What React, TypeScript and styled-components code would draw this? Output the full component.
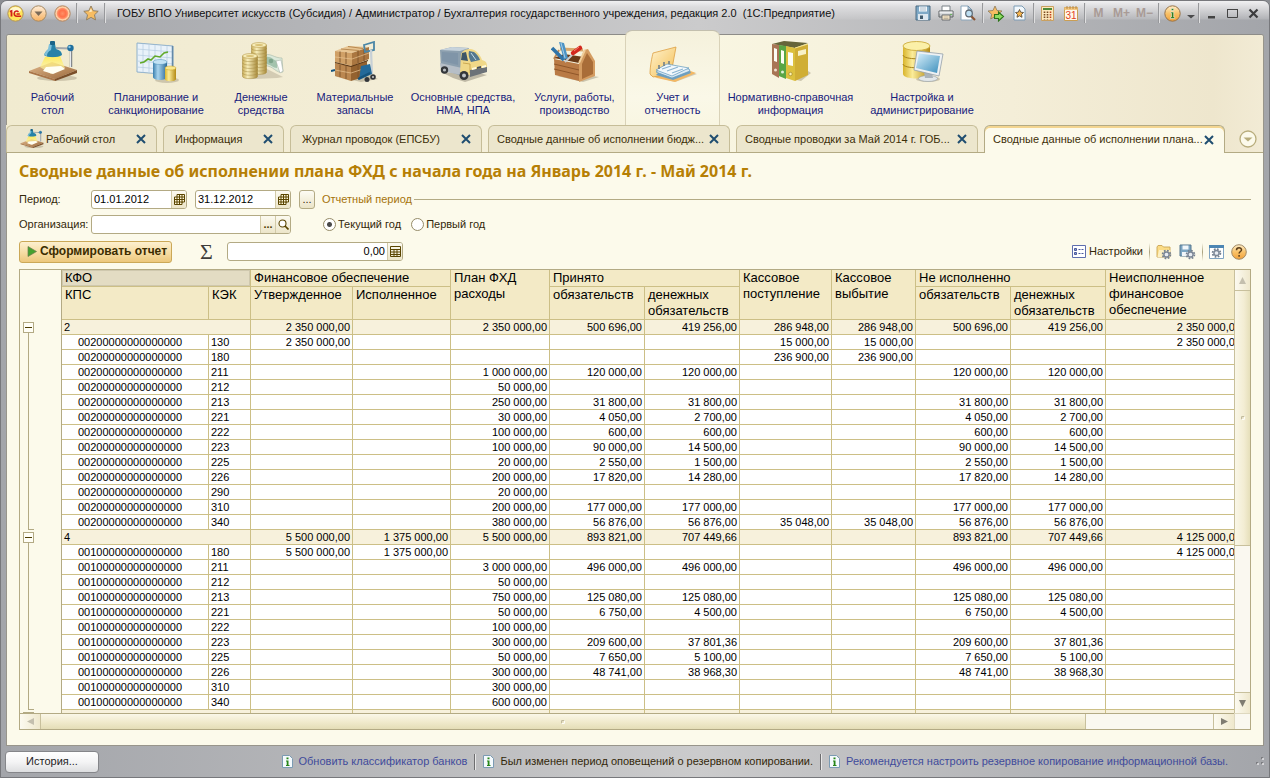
import React from "react";
import styled, { createGlobalStyle, css } from "styled-components";

const GlobalStyle = createGlobalStyle`
  * { box-sizing: border-box; }
  html, body { margin: 0; padding: 0; height: 100%; }
  body {
    font-family: "Liberation Sans", Arial, sans-serif;
    font-size: 11px;
    line-height: 13px;
    color: #33280a;
    background: #8b8d92;
    overflow: hidden;
  }
  button, input { font: inherit; color: inherit; margin: 0; }
  button { cursor: pointer; }
  svg { display: block; flex: none; }
`;

/* ---------- window frame ---------- */

const Window = styled.div`
  display: flex;
  flex-direction: column;
  height: 100vh;
  border: 1px solid #77787c;
  border-radius: 7px 7px 0 0;
  background: linear-gradient(90deg, #a3a5aa 0%, #b4b5b8 25%, #cbcbcc 55%, #b4b5b8 80%, #a3a5aa 100%);
`;

const TitleBar = styled.header`
  display: flex;
  align-items: center;
  height: 33px;
  flex: none;
  padding: 0 5px 9px 6px;
  border-radius: 6px 6px 0 0;
  background: linear-gradient(180deg, #f1f1f2 0, #dcdcde 6px, rgba(210, 210, 212, 0.3) 18px, rgba(200, 200, 202, 0) 19px);
`;

const TitleText = styled.h1`
  flex: 1;
  min-width: 0;
  margin: 0 0 0 8px;
  font-size: 11px;
  font-weight: normal;
  line-height: 14px;
  color: #111;
  white-space: pre;
  overflow: hidden;
  text-overflow: ellipsis;
`;

const BarButton = styled.button<{ $w?: number }>`
  display: flex;
  align-items: center;
  justify-content: center;
  width: ${(p) => p.$w ?? 23}px;
  height: 20px;
  padding: 0;
  border: 0;
  background: none;
  flex: none;
`;

const BarSeparator = styled.span<{ $m?: number }>`
  width: 1px;
  height: 20px;
  margin: 0 ${(p) => p.$m ?? 2}px;
  background: #97989b;
  box-shadow: 1px 0 0 #dfdfe0;
  flex: none;
`;

const MemoryButton = styled(BarButton)`
  font-size: 12px;
  font-weight: bold;
  color: #a99b96;
`;

const Body = styled.div`
  display: flex;
  flex-direction: column;
  flex: 1;
  min-height: 0;
  margin: 0 5px;
  border: 1px solid #98958b;
  border-top-color: #8d8c88;
  border-radius: 3px 3px 0 0;
  background: #fcfaeb;
`;

/* ---------- sections ribbon ---------- */

const Ribbon = styled.nav`
  display: flex;
  gap: 4px;
  height: 90px;
  flex: none;
  border-radius: 3px 3px 0 0;
  background: linear-gradient(90deg, #f1ebd0 0, #f3edd6 30%, #f9f6e2 55%, #f4eed8 80%, #eee6cd 96%, #f2ebd5 100%);
`;

const Section = styled.button<{ $w: number; $active?: boolean }>`
  display: flex;
  flex-direction: column;
  align-items: center;
  width: ${(p) => p.$w}px;
  flex: none;
  padding: 6px 0 0;
  border: 0;
  background: none;
  color: #17217d;
  line-height: 13px;
  text-align: center;
  white-space: pre-line;

  svg { margin-bottom: 8px; }

  ${(p) =>
    p.$active &&
    css`
      margin-top: -5px;
      padding-top: 10px;
      border: 1px solid #d9d2b8;
      border-top-color: #c3bfae;
      border-bottom: 0;
      border-radius: 7px 7px 0 0;
      background: linear-gradient(180deg, #f5f1dc, #faf8e8 70%, #f9f6e2);
    `}
`;

/* ---------- open pages ---------- */

const TabStrip = styled.div`
  display: flex;
  align-items: flex-end;
  gap: 6px;
  height: 28px;
  flex: none;
  margin-left: -1px;
  border-bottom: 1px solid #b3aa84;
  background: linear-gradient(90deg, #f1ebd0 0, #f3edd6 30%, #f9f6e2 55%, #f4eed8 80%, #eee6cd 96%, #f2ebd5 100%);
`;

const Tab = styled.div<{ $w: number; $active?: boolean }>`
  display: flex;
  align-items: center;
  width: ${(p) => p.$w}px;
  height: 27px;
  padding: 0 10px 0 ${(p) => (p.$w > 200 ? 8 : 11)}px;
  border: 1px solid #c6bd98;
  border-bottom: 0;
  border-radius: 6px 6px 0 0;
  background: #ece6cd;
  color: #3c2f08;

  ${(p) =>
    p.$active &&
    css`
      height: 28px;
      margin-bottom: -1px;
      border-color: #b3aa84;
      background: #fcfaeb;
      box-shadow: inset 0 2px 0 #f3d590;
    `}
`;

const TabLabel = styled.span`
  flex: 1;
  min-width: 0;
  white-space: nowrap;
`;

const TabClose = styled.button`
  display: flex;
  padding: 0;
  border: 0;
  background: none;
`;

const TabMenu = styled.button`
  display: flex;
  align-self: center;
  margin-left: 8px;
  padding: 0;
  border: 0;
  background: none;
`;

/* ---------- report form ---------- */

const Page = styled.main`
  display: flex;
  flex-direction: column;
  flex: 1;
  min-height: 0;
  padding: 8px 12px 15px;
`;

const Heading = styled.h2`
  margin: 0 0 9px;
  font-family: "Noto Sans", sans-serif;
  font-size: 16px;
  font-weight: bold;
  line-height: 20px;
  color: #b67f05;
  white-space: nowrap;
`;

const FormRow = styled.div`
  display: flex;
  align-items: center;
  height: 19px;
  margin-bottom: 6px;
  flex: none;
`;

const FieldLabel = styled.label`
  width: 72px;
  flex: none;
`;

const Field = styled.span<{ $w: number }>`
  display: flex;
  width: ${(p) => p.$w}px;
  height: 19px;
  flex: none;
  margin-right: 8px;
  border: 1px solid #b3aa84;
  border-radius: 3px;
  background: #fff;
  overflow: hidden;
`;

const Input = styled.input<{ $right?: boolean }>`
  flex: 1;
  width: 0;
  min-width: 0;
  padding: 0 2px;
  border: 0;
  outline: 0;
  background: none;
  color: #000;
  text-align: ${(p) => (p.$right ? "right" : "left")};
`;

const FieldButton = styled.button`
  display: flex;
  align-items: center;
  justify-content: center;
  width: 15px;
  padding: 0;
  border: 0;
  border-left: 1px solid #d2caa8;
  background: linear-gradient(180deg, #fcfaf0, #ece5c9);
  color: #4d3c00;
  font-weight: bold;
`;

const MoreButton = styled.button`
  width: 16px;
  height: 19px;
  padding: 0;
  margin-right: 7px;
  border: 1px solid #b3aa84;
  border-radius: 3px;
  background: linear-gradient(180deg, #fdfcf4, #ebe4c8);
`;

const Legend = styled.span`
  display: flex;
  align-items: center;
  flex: 1;
  gap: 2px;
  color: #a5730a;
  white-space: nowrap;

  &::after {
    content: "";
    flex: 1;
    height: 1px;
    background: #b3aa84;
  }
`;

const RadioGroup = styled.span`
  display: flex;
  gap: 10px;
  margin-left: 24px;
`;

const RadioLabel = styled.label`
  display: flex;
  align-items: center;
  gap: 2px;
`;

const Radio = styled.input`
  appearance: none;
  width: 13px;
  height: 13px;
  border: 1px solid #958b68;
  border-radius: 50%;
  background: #fff;

  &:checked {
    background: radial-gradient(circle, #4a4a4a 0, #4a4a4a 2px, #fff 3px);
  }
`;

const CommandRow = styled(FormRow)`
  height: 23px;
  margin-bottom: 6px;
`;

const RunButton = styled.button`
  display: flex;
  align-items: center;
  gap: 3px;
  width: 153px;
  height: 22px;
  flex: none;
  padding: 0 4px 0 7px;
  border: 1px solid #cba857;
  border-radius: 3px;
  background: linear-gradient(180deg, #fdf0cf, #f6dca2 55%, #ecc77c);
  color: #3c2c00;
  font-size: 12px;
  font-weight: bold;
  white-space: nowrap;
`;

const Sigma = styled.span`
  width: 55px;
  padding-left: 28px;
  font-family: "Liberation Serif", serif;
  font-size: 22px;
  line-height: 22px;
  color: #3f3d3a;
`;

const Commands = styled.span`
  display: flex;
  align-items: center;
  margin-left: auto;
  margin-right: 4px;
`;

const CommandButton = styled.button<{ $ml?: number }>`
  display: flex;
  align-items: center;
  gap: 3px;
  margin-left: ${(p) => p.$ml ?? 0}px;
  padding: 0;
  border: 0;
  background: none;
`;

const CommandSeparator = styled.span`
  width: 1px;
  height: 18px;
  margin: 0 6px;
  background: linear-gradient(180deg, #fcfaeb, #a9a07c, #fcfaeb);
`;

/* ---------- report ---------- */

const Report = styled.div`
  display: grid;
  grid-template-columns: minmax(0, 1fr) 16px;
  grid-template-rows: minmax(0, 1fr) 16px;
  flex: 1;
  min-height: 0;
  border: 1px solid #b3aa84;
`;

const Viewport = styled.div`
  display: flex;
  align-items: flex-start;
  overflow: auto;
  scrollbar-width: none;
  background: #fff;
`;

const Gutter = styled.div`
  width: 42px;
  flex: none;
  padding-top: 50px;
  border-right: 1px solid #b3aa84;
  background: #fcfaeb;
`;

const GutterGroup = styled.div<{ $rows: number }>`
  display: flex;
  flex-direction: column;
  align-items: flex-start;
  height: ${(p) => p.$rows * 15}px;
  padding: 2px 0 0 3px;

  &::after {
    content: "";
    flex: 1;
    width: 5px;
    margin-left: 5px;
    border-left: 1px solid #b3aa84;
    border-bottom: 1px solid #b3aa84;
  }
`;

const Collapse = styled.button`
  display: flex;
  align-items: center;
  justify-content: center;
  width: 11px;
  height: 11px;
  flex: none;
  padding: 0;
  border: 1px solid #b3aa84;
  background: #fffef6;

  &::before {
    content: "";
    width: 7px;
    height: 1px;
    background: #4d3c00;
  }
`;

const Table = styled.table`
  width: 1182px;
  flex: none;
  table-layout: fixed;
  border-collapse: separate;
  border-spacing: 0;
  color: #000;
`;

const HeadCell = styled.th<{ $selected?: boolean }>`
  padding: 0 0 0 3px;
  border-right: 1px solid #ccbf86;
  border-bottom: 1px solid #ccbf86;
  background: #f3eac6;
  font-size: 13px;
  font-weight: normal;
  line-height: 16px;
  text-align: left;
  vertical-align: top;
  white-space: nowrap;
  ${(p) =>
    p.$selected &&
    css`
      background: #e3dcc3;
      box-shadow: inset 0 0 0 1px #cfc8ae;
    `}
`;

const HeadRow = styled.tr<{ $h: number }>`
  height: ${(p) => p.$h}px;
`;

const Row = styled.tr<{ $group?: boolean }>`
  height: 15px;
  background: ${(p) => (p.$group ? "#f7f1dc" : "#fff")};
`;

const Cell = styled.td<{ $align?: "left" | "code" }>`
  height: 15px;
  padding: ${(p) => (p.$align === "code" ? "0 0 0 16px" : p.$align === "left" ? "0 0 0 2px" : "0 2px 0 0")};
  border-right: 1px solid #ccbf86;
  border-bottom: 1px solid #ccbf86;
  text-align: ${(p) => (p.$align ? "left" : "right")};
  line-height: 14px;
  white-space: nowrap;
`;

const VScroll = styled.div`
  display: flex;
  flex-direction: column;
  border-left: 1px solid #c8c09c;
  background: #faf8f0;
`;

const VThumb = styled.div`
  display: flex;
  align-items: center;
  justify-content: center;
  flex: 255;
  border: solid #c8c09c;
  border-width: 1px 0;
  background: linear-gradient(90deg, #faf7e8, #f3edd3 60%, #e6dfba);
`;

const VTrack = styled.div`
  flex: 147;
  border-bottom: 1px solid #c8c09c;
`;

const ScrollButton = styled.button<{ $tall?: boolean }>`
  display: flex;
  align-items: center;
  justify-content: center;
  width: ${(p) => (p.$tall ? 15 : 20)}px;
  height: ${(p) => (p.$tall ? 20 : 15)}px;
  padding: 0;
  border: 0;
  flex: none;
  background: linear-gradient(90deg, #fcfaf0, #efe8cd);
`;

const HScroll = styled.div`
  display: flex;
  border-top: 1px solid #b3aa84;
  background: #faf8f0;
`;

const HThumb = styled.div`
  display: flex;
  align-items: center;
  justify-content: center;
  flex: 1047;
  border: solid #c8c09c;
  border-width: 0 1px;
  background: linear-gradient(180deg, #faf7e8, #f1ebce 50%, #e4ddb6);
`;

const HTrack = styled.div`
  flex: 127;
  border-right: 1px solid #c8c09c;
`;

const Grip = styled.span`
  width: 4px;
  height: 4px;
  border: 1px solid #b9b294;
  border-right-color: #fff;
  border-bottom-color: #fff;
  border-radius: 2px;
`;

const Corner = styled.div`
  border: 1px solid #ded8bf;
  border-width: 1px 0 0 1px;
  background: #faf8f0;
`;

/* ---------- status bar ---------- */

const StatusBar = styled.footer`
  display: flex;
  align-items: center;
  height: 31px;
  flex: none;
  padding: 0 4px 0 4px;
`;

const HistoryButton = styled.button`
  width: 94px;
  height: 22px;
  padding: 0;
  border: 1px solid #85868a;
  border-radius: 4px;
  background: linear-gradient(180deg, #fff, #f4f4f5 50%, #dddee0);
  color: #222;
`;

const Messages = styled.div`
  display: flex;
  align-items: center;
  margin-left: auto;
  margin-right: 26px;
`;

const Message = styled.span`
  display: flex;
  align-items: center;
  gap: 6px;
  white-space: nowrap;
`;

const MessageLink = styled.a`
  color: #3f4b9b;
  text-decoration: none;
`;

const MessageSeparator = styled.span`
  width: 2px;
  height: 16px;
  margin: 0 7px;
  border-left: 1px solid #6d6d6f;
  border-right: 1px solid #e8e8e8;
`;

/* ---------- drawings ---------- */

const GradientSheet = styled.svg`
  position: absolute;
`;

const Gradients = () => (
  <GradientSheet width="0" height="0" aria-hidden="true">
    <defs>
      <linearGradient id="wood" x1="0" y1="0" x2="1" y2="1">
        <stop offset="0" stopColor="#e2b98c" />
        <stop offset="1" stopColor="#9a683c" />
      </linearGradient>
      <linearGradient id="gold" x1="0" x2="1">
        <stop offset="0" stopColor="#d9b52c" />
        <stop offset="0.35" stopColor="#fbec9a" />
        <stop offset="1" stopColor="#b48a14" />
      </linearGradient>
      <linearGradient id="coin" x1="0" x2="1">
        <stop offset="0" stopColor="#c9ad58" />
        <stop offset="0.35" stopColor="#f8eebb" />
        <stop offset="1" stopColor="#a88a3a" />
      </linearGradient>
      <linearGradient id="blue" x1="0" x2="1">
        <stop offset="0" stopColor="#3a7fae" />
        <stop offset="0.35" stopColor="#a8d4ee" />
        <stop offset="1" stopColor="#2d6b98" />
      </linearGradient>
      <linearGradient id="screen" x1="0" y1="0" x2="1" y2="1">
        <stop offset="0" stopColor="#d9f0fa" />
        <stop offset="1" stopColor="#3d8fbd" />
      </linearGradient>
      <linearGradient id="light" x1="0" y1="0" x2="0" y2="1">
        <stop offset="0" stopColor="#ffe94a" />
        <stop offset="1" stopColor="#fff9c8" stopOpacity="0.6" />
      </linearGradient>
      <linearGradient id="folder" x1="0" y1="0" x2="1" y2="1">
        <stop offset="0" stopColor="#fff3cf" />
        <stop offset="1" stopColor="#f4bf55" />
      </linearGradient>
      <linearGradient id="orange" x1="0" y1="0" x2="0" y2="1">
        <stop offset="0" stopColor="#ffeec8" />
        <stop offset="0.5" stopColor="#f9c269" />
        <stop offset="1" stopColor="#f2a13a" />
      </linearGradient>
      <linearGradient id="peach" x1="0" y1="0" x2="0" y2="1">
        <stop offset="0" stopColor="#ffeeda" />
        <stop offset="1" stopColor="#f7b160" />
      </linearGradient>
      <radialGradient id="red">
        <stop offset="0" stopColor="#ff8f66" />
        <stop offset="0.6" stopColor="#ff7048" />
        <stop offset="1" stopColor="#ff9a75" />
      </radialGradient>
    </defs>
  </GradientSheet>
);

const DeskIcon = ({ w = 48, h = 42 }: { w?: number; h?: number }) => (
  <svg width={w} height={h} viewBox="0 0 48 42">
    <ellipse cx="28" cy="37" rx="20" ry="3" fill="#8a7f66" opacity="0.35" />
    <path d="M0 30 23 21 48 29 26 38Z" fill="url(#wood)" />
    <path d="M0 30v2l26 8v-2Z" fill="#a97549" />
    <path d="M26 38v2l22-8v-3Z" fill="#7b4f2a" />
    <path d="M27 7 41 7.500" stroke="#a2a8ad" strokeWidth="2" />
    <path d="M42 8v18" stroke="#84898e" strokeWidth="2.500" />
    <path d="M41.500 8v18" stroke="#e8ebee" />
    <path d="M16 16 11 26 22 33 36 27 31 15Z" fill="url(#light)" opacity="0.9" />
    <path d="M17 26 32 25 36 28 24 33 14 30Z" fill="#fffef2" />
    <path d="M20 3h6l1 5c4 1 6 3 6 6-4 3-15 3-18 0 1-3 3-5 5-6Z" fill="#2782a8" />
    <path d="M20 3h3l-1 6c-3 2-4 3-4 6l-3-1c1-3 3-5 4-6Z" fill="#7fc0da" />
    <path d="M16 15c4 2 13 2 17 0-3 3-13 4-17 0Z" fill="#fff06a" />
    <rect x="21" y="0" width="5" height="4" rx="1" fill="#1b6488" />
    <circle cx="41.500" cy="7" r="3.200" fill="#1f6f9f" />
    <circle cx="40.500" cy="6" r="1.200" fill="#8cc7e4" />
  </svg>
);

const PlanIcon = () => (
  <svg width="48" height="42" viewBox="0 0 48 42">
    <ellipse cx="35" cy="39" rx="12" ry="3" fill="#8a7f66" opacity="0.35" />
    <path d="M5 2 41 5v29L5 31Z" fill="#e9f2fa" stroke="#8fb0ca" />
    <path d="M11 2.500v29M17 3v29M23 3.500v29M29 4v29M35 4.500v29M5 8l36 3M5 14l36 3M5 20l36 3M5 26l36 3" stroke="#b9cfe2" strokeWidth="0.800" />
    <path d="M40.500 5v29" stroke="#6388a8" strokeWidth="1.500" />
    <path d="m8 22 4-1 4-3 3 1 4-4 5 1 4-4 4-1" fill="none" stroke="#62aa2a" strokeWidth="1.600" />
    <path d="M21 21v15c0 4 14 4 14 0V21Z" fill="url(#blue)" />
    <ellipse cx="28" cy="21" rx="7" ry="2.500" fill="#c2e2f4" stroke="#4c8fb9" strokeWidth="0.500" />
    <path d="M33 27v11c0 3 11 3 11 0V27Z" fill="url(#gold)" />
    <ellipse cx="38.500" cy="27" rx="5.500" ry="2" fill="#fbe88c" stroke="#c29a22" strokeWidth="0.500" />
  </svg>
);

const CoinStack = ({ x, y, n }: { x: number; y: number; n: number }) => (
  <g>
    {Array.from({ length: n }, (_, i) => (
      <path
        key={i}
        d={`M${x - 7.5} ${y + (n - 1 - i) * 3.4}v3.400c0 3 15 3 15 0v-3.400Z`}
        fill="url(#coin)"
        stroke="#a58a42"
        strokeWidth="0.500"
      />
    ))}
    <ellipse cx={x} cy={y} rx="7.500" ry="2.400" fill="#f6ecb8" stroke="#b89b4c" strokeWidth="0.600" />
    <ellipse cx={x} cy={y} rx="4" ry="1.100" fill="#d9c176" />
  </g>
);

const MoneyIcon = () => (
  <svg width="48" height="42" viewBox="0 0 48 42">
    <path d="M12 36 30 28 46 36 40 37 16 38Z" fill="#8a7f66" opacity="0.300" />
    <path d="M28 14c6-2 9 3 17 3l1 14c-7 2-10-7-18-6Z" fill="#dbe9da" stroke="#a6b7a6" strokeWidth="0.600" />
    <path d="M29 16c5-1 7 3 11 4v7c-4 0-7-4-11-4Z" fill="#a3c3ad" />
    <circle cx="34" cy="20" r="2.300" fill="#7fa58c" />
    <path d="m39 20 5-1 2 11-3 2Z" fill="#fff" stroke="#9fa89f" strokeWidth="0.500" />
    <CoinStack x={22} y={4} n={8} />
    <CoinStack x={13} y={15} n={6} />
  </svg>
);

const BoxesIcon = () => (
  <svg width="48" height="42" viewBox="0 0 48 42">
    <path d="M4 35 38 34 47 38 30 41Z" fill="#8a7f66" opacity="0.400" />
    <path d="m4 22 16 3v15L4 35Z" fill="#bb8750" />
    <path d="m20 25 16-5v15l-16 5Z" fill="#94622f" />
    <path d="m4 10 13-5 21 1-17 6Z" fill="#e8c592" />
    <path d="m4 10 17 2v13L4 21Z" fill="#d0a066" />
    <path d="m21 12 17-6v12l-17 7Z" fill="#aa7640" />
    <path d="M4 21.500 20 25.500l17-6" fill="none" stroke="#5b3715" strokeWidth="1.100" />
    <path d="M9 10.500v11M15 11v12M27 10v12M33 8v12M9 24v12M15 25v13M27 23v13" stroke="#7d5228" strokeWidth="0.900" />
    <path d="m10 8 18 1.500M17 5.500l15 2" stroke="#b98a52" />
    <path d="m4 16 17 2 17-6M4 29l16 3 15-5" fill="none" stroke="#e8c390" strokeWidth="0.700" />
    <path d="M33 4 43 1v8l-9 2Z" fill="none" stroke="#4a86a6" strokeWidth="1.800" />
    <path d="m40 9 1 24" stroke="#c7d0d6" strokeWidth="2.200" />
    <path d="m30 25 9-2 2 10-13 6Z" fill="#236a9a" />
    <path d="m27 38 12-6M0 30l4-1" stroke="#15547d" strokeWidth="2" />
    <circle cx="36" cy="38.500" r="2.500" fill="#33373b" />
    <circle cx="42" cy="36" r="2.800" fill="#33373b" />
    <circle cx="42" cy="36" r="1" fill="#d0d0d0" />
  </svg>
);

const VanIcon = () => (
  <svg width="48" height="42" viewBox="0 0 48 42">
    <path d="M4 32 30 30 48 34 26 41 14 37Z" fill="#6e6757" opacity="0.400" />
    <path d="m1 9 12-3 17 1-5 12-2 16L2 28Z" fill="#8c9fae" />
    <path d="m1 9 12-3 17 1-9 3Z" fill="#c7d3dc" />
    <path d="M3 11 19 12v12L3 20Z" fill="#8095a8" />
    <path d="m1 22 22 5v7L2 30Z" fill="#b6bec6" />
    <path d="M22 13c2-4 5-5 10-5 5 1 9 5 11 11 4 1 5 3 5 6l-1 5-21 5-5-3Z" fill="#f0d888" />
    <path d="m30 10 5 1c3 2 5 5 6 8l-9 2c-2-4-3-7-2-11Z" fill="#53778f" />
    <path d="m23 12 4-1 2 9-7-1Z" fill="#3e5668" />
    <path d="m32 12 5 7" stroke="#c5dbe6" />
    <path d="m24 22 7 1v9" fill="none" stroke="#c29d45" strokeWidth="0.800" />
    <path d="m31 29 17-3v5l-17 5Z" fill="#6c7278" />
    <path d="m33 27 4-1v2l-4 1ZM43 25l4-1v2l-4 1Z" fill="#fffbe0" />
    <path d="m38 26 4-1v2l-4 1Z" fill="#47505a" />
    <circle cx="5.500" cy="29" r="3.700" fill="#34373a" />
    <circle cx="5.500" cy="29" r="1.600" fill="#b9bdc0" />
    <circle cx="25" cy="34.500" r="4.500" fill="#34373a" />
    <circle cx="25" cy="34.500" r="2" fill="#c1c5c8" />
  </svg>
);

const ToolboxIcon = () => (
  <svg width="48" height="42" viewBox="0 0 48 42">
    <path d="M6 35 36 34 48 36 32 41Z" fill="#8a7f66" opacity="0.400" />
    <path d="M3 18 8 9" stroke="#c58c54" strokeWidth="2" />
    <path d="M9 8 32 9" stroke="#d9a86c" strokeWidth="3" />
    <path d="m3 17 10-4 20 3-5 6Z" fill="#6a3a18" />
    <path d="m3 18 25 5v17L4 34Z" fill="#b97a45" />
    <path d="m3 23 25 6M3 28l25 6" stroke="#8f5629" />
    <path d="m28 22 5-13 4-1 7 12v15l-16 6Z" fill="#d49c61" />
    <path d="m31 23 5-11 6 9v12l-11 5Z" fill="#a96d38" />
    <path d="M28 22 34 9" stroke="#f1cf9a" strokeWidth="1.800" />
    <path d="m1 7 12 12" stroke="#2f74a8" strokeWidth="3.500" />
    <path d="m8 1 5 1 4 15-4 2Z" fill="#4c93c4" />
    <path d="m10 2 4 15" stroke="#a8d0ea" />
    <path d="m14 21 9-9" stroke="#c5cbd0" strokeWidth="2" />
    <path d="m22 12 7-5" stroke="#d3281e" strokeWidth="4.500" strokeLinecap="round" />
    <path d="m23 10 5-4" stroke="#f78274" />
  </svg>
);

const AccountingIcon = () => (
  <svg width="48" height="42" viewBox="0 0 48 42">
    <path d="M8 36 26 41 48 33 38 30Z" fill="#8a7f66" opacity="0.350" />
    <path d="m1 34 7 3 18 4 21-9-11-4Z" fill="#f3b864" />
    <path d="M1 33C1 25 3 16 4 12l23-6-5 27L4 36Z" fill="url(#folder)" stroke="#dd9f42" strokeWidth="0.800" />
    <path d="m7 34 9-9 24 3 2 4-18 7Z" fill="#6f9fbf" />
    <path d="m7 31 9-6 24 3 1 2-18 7Z" fill="#dcebf5" stroke="#5d97bd" strokeWidth="0.700" />
    <path d="m7 29 11-6 22 4-17 8Z" fill="#f2f8fc" stroke="#5d97bd" strokeWidth="0.700" />
    <path d="M13 28 22 25M18 30l11-4M23 32l11-4" stroke="#8bb4d0" strokeWidth="1.200" />
    <path d="M10 28v-4M15 25v-4M20 23v-3" stroke="#6b7b86" strokeWidth="1.500" />
  </svg>
);

const BindersIcon = () => (
  <svg width="48" height="42" viewBox="0 0 48 42">
    <path d="m12 35 22 5 10-8-6-4Z" fill="#8a7f66" opacity="0.400" />
    <path d="m5 3 12-3 24 2-13 5Z" fill="#66653a" />
    <path d="m5 3 7 1v33l-7-4Z" fill="#a87554" />
    <path d="m12 4 7 1v33l-7-3Z" fill="#5aa545" />
    <path d="m19 5 9 2v33l-9-3Z" fill="#dcc03e" />
    <path d="m28 7 13-4v31l-13 6Z" fill="#d0ae35" />
    <path d="m28 7 13-4" stroke="#f5e38a" />
    <path d="m7 7 3 1v13l-3-1ZM14 9l3 1v13l-3-1ZM21 11l5 1v13l-5-1Z" fill="#fdfdf5" />
    <path d="m31 10 8-2v5l-8 2Z" fill="#f8f1c8" />
    <circle cx="8.500" cy="29" r="1.500" fill="#f1dfcf" />
    <circle cx="15.500" cy="31" r="1.500" fill="#dff0d8" />
    <circle cx="23.500" cy="33" r="1.700" fill="#fff3b0" stroke="#7e6914" strokeWidth="0.500" />
  </svg>
);

const AdminIcon = () => (
  <svg width="48" height="42" viewBox="0 0 48 42">
    <ellipse cx="30" cy="38" rx="12" ry="3" fill="#8a7f66" opacity="0.400" />
    <path d="M5 5v28c0 6 27 6 27 0V5Z" fill="url(#gold)" />
    <path d="M5 14c0 5 27 5 27 0M5 23c0 5 27 5 27 0" fill="none" stroke="#a9841a" />
    <ellipse cx="18.500" cy="5" rx="13.500" ry="4.500" fill="#fbf0a8" stroke="#c7a32e" strokeWidth="0.800" />
    <ellipse cx="30" cy="37.500" rx="9.500" ry="3" fill="#e2e7ea" stroke="#95a0a8" strokeWidth="0.600" />
    <path d="m26 31 8 1 1 5h-8Z" fill="#aab3ba" />
    <path d="m19 10 26 3-4 22-25-6Z" fill="#eef1f3" stroke="#94a0aa" strokeWidth="0.800" />
    <path d="m21 12.500 21 2.500-3 17-21-5Z" fill="url(#screen)" />
  </svg>
);

const CloseIcon = () => (
  <svg width="10" height="10" viewBox="0 0 10 10">
    <path d="m1 1 8 8M9 1 1 9" stroke="#1f4d70" strokeWidth="2" />
  </svg>
);

const Star = () => (
  <svg width="16" height="16" viewBox="0 0 16 16">
    <path d="m8 1 2.200 4.700 5 .6-3.700 3.500 1 5.100L8 12.400l-4.500 2.500 1-5.100L.8 6.300l5-.6Z" fill="#f8bd62" stroke="#8b7a5c" strokeWidth="0.900" />
    <path d="m8 3.500 1.300 3-3.500.7Z" fill="#fdebc4" />
  </svg>
);

const LogoIcon = () => (
  <svg width="17" height="17" viewBox="0 0 17 17">
    <circle cx="8.500" cy="8.500" r="7.700" fill="#ffe45c" stroke="#b09258" />
    <ellipse cx="8.500" cy="5" rx="5.500" ry="3" fill="#fff8cc" />
    <path d="M2.800 6.500 4.500 6v5.500" fill="none" stroke="#d3211d" strokeWidth="1.800" />
    <path d="M11.500 7C10 5.300 7.200 6 7.200 8.600c0 1.800 1.200 2.600 2.600 2.600h4.400M9.600 8.900h3.200" fill="none" stroke="#d3211d" strokeWidth="1.500" />
  </svg>
);

const MenuCircleIcon = () => (
  <svg width="17" height="17" viewBox="0 0 17 17">
    <circle cx="8.500" cy="8.500" r="7.700" fill="url(#peach)" stroke="#a68a64" />
    <path d="M4.500 6.500h8l-4 4.500Z" fill="#7a6a58" />
  </svg>
);

const RedCircleIcon = () => (
  <svg width="17" height="17" viewBox="0 0 17 17">
    <circle cx="8.500" cy="8.500" r="7.700" fill="#ffcfa4" stroke="#b08662" />
    <circle cx="8.500" cy="8.500" r="5.700" fill="url(#red)" />
  </svg>
);

const SaveIcon = () => (
  <svg width="16" height="16" viewBox="0 0 16 16">
    <path d="M1 1h14v14H1Z" fill="#7fa9c6" stroke="#4d6c83" />
    <path d="M4 1.500h8v5H4Z" fill="#f1f6fa" />
    <path d="M5 3h6M5 5h6" stroke="#a2b4c2" strokeWidth="0.800" />
    <path d="M3 9h10v6H3Z" fill="#dce7ef" />
    <path d="M5 10.500h3V14H5Z" fill="#40596b" />
  </svg>
);

const PrintIcon = () => (
  <svg width="16" height="16" viewBox="0 0 16 16">
    <path d="M4 6V1h8v5Z" fill="#fff" stroke="#7b8288" />
    <path d="M1 6h14v6H1Z" fill="#c8cbce" stroke="#5d6063" />
    <path d="M1.500 6.500h13v2h-13Z" fill="#ecedef" />
    <path d="M4 10h8v5H4Z" fill="#fdeccb" stroke="#6d6f72" />
    <path d="M5.500 12h5M5.500 13.500h5" stroke="#a69f8c" strokeWidth="0.700" />
    <circle cx="13" cy="9.500" r="0.800" fill="#49a436" />
  </svg>
);

const PreviewIcon = () => (
  <svg width="17" height="16" viewBox="0 0 17 16">
    <path d="M1 1h7l4 4v10H1Z" fill="#fff" stroke="#8aa6bb" />
    <path d="M8 1v4h4Z" fill="#b9cddc" stroke="#6787a0" strokeWidth="0.700" />
    <path d="m11 11 4 4" stroke="#8a5330" strokeWidth="2.200" />
    <circle cx="9" cy="8.500" r="3.300" fill="#bfe0f3" stroke="#5d6770" strokeWidth="1.200" />
  </svg>
);

const AddStarIcon = () => (
  <svg width="17" height="17" viewBox="0 0 17 17">
    <path d="m7 1 2 4.500 5 .5-3.700 3.300 1 4.700L7 11.600 2.700 14l1-4.700L0 6l5-.5Z" fill="#f8bd62" stroke="#8b7a5c" strokeWidth="0.800" />
    <path d="M6.500 9.500h4V7l5 4.500-5 4.500v-2.500h-4Z" fill="#8fdc62" stroke="#2d7519" strokeWidth="1.100" />
  </svg>
);

const FavoritesIcon = () => (
  <svg width="13" height="16" viewBox="0 0 13 16">
    <path d="M1 1h8l3 3v11H1Z" fill="#f2f8fc" stroke="#7c9cb5" />
    <path d="m6.500 4.500 1.200 2.700 2.800.3-2 2 .5 2.800-2.500-1.500L4 12.300l.5-2.800-2-2 2.800-.3Z" fill="#f8b64e" stroke="#5c4e39" strokeWidth="0.900" />
  </svg>
);

const CalculatorIcon = () => (
  <svg width="13" height="15" viewBox="0 0 13 15">
    <path d="M.5.500h12v14H.5Z" fill="#fde9bd" stroke="#c9a060" />
    <path d="M2 2h9v2H2Z" fill="#4c8a3a" />
    <path d="M3.500 5.500v8M6.500 5.500v8" stroke="#7a4b24" strokeWidth="1.600" strokeDasharray="1.500 1" />
    <path d="M9.500 5.500v8" stroke="#c2401f" strokeWidth="1.600" strokeDasharray="1.500 1" />
  </svg>
);

const CalendarIcon = () => (
  <svg width="14" height="15" viewBox="0 0 14 15">
    <path d="M.5 1.500h13v13H.5Z" fill="#fff8ea" stroke="#c99e55" />
    <path d="M.5 1.500h13v2.500h-13Z" fill="#f4c983" />
    <path d="M3 0v3M6 0v3M9 0v3M12 0v3" stroke="#a9772f" strokeWidth="0.800" />
    <text x="7" y="13" textAnchor="middle" fontFamily="Liberation Sans" fontSize="10" fill="#e2421e">31</text>
  </svg>
);

const InfoIcon = () => (
  <svg width="17" height="17" viewBox="0 0 17 17">
    <circle cx="8.500" cy="8.500" r="7.700" fill="url(#orange)" stroke="#97744a" />
    <path d="M7.300 3.500h2.400v2H7.300ZM6.800 7h2.900v5h1v1.500H6.500V12h1V8.300h-.7Z" fill="#2f7d21" stroke="#fff" strokeWidth="0.500" />
  </svg>
);

const SmallIcon = ({ name }: { name: "caret" | "min" | "max" | "close" }) => (
  <svg width="13" height="13" viewBox="0 0 13 13">
    {name === "caret" && <path d="M3 8h8l-4 3.500Z" fill="#4b4b4d" />}
    {name === "min" && <path d="M3 9h7v2.500H3Z" fill="#444" />}
    {name === "max" && <path d="M1.500 2.500h10v8h-10ZM1 2.500h11" fill="none" stroke="#444" />}
    {name === "close" && <path d="m2.500 2.500 8 8M10.500 2.500l-8 8" stroke="#3c3c3e" strokeWidth="2.200" />}
  </svg>
);

const TabMenuIcon = () => (
  <svg width="18" height="18" viewBox="0 0 18 18">
    <circle cx="9" cy="9" r="8" fill="#fcfaeb" stroke="#b8ad7c" strokeWidth="1.300" />
    <path d="M4.500 7.500h9l-4.500 4Z" fill="#b8ad7c" />
  </svg>
);

const DateIcon = () => (
  <svg width="11" height="11" viewBox="0 0 11 11">
    <path d="M3 .5h7.500v7.500H8v2.500H.5V3H3Z" fill="#fff8dc" />
    <path d="M3 .5h7.500v7.500H8v2.500H.5V3H3ZM3 3h7.500M3 3v7.500M5.500.5v10M.5 5.500h10M.5 8h8M8 .5v8" fill="none" stroke="#5a4500" />
  </svg>
);

const KeypadIcon = () => (
  <svg width="11" height="11" viewBox="0 0 11 11">
    <path d="M.5.5h10v10H.5ZM.5 3.500h10M.5 6h10M.5 8.500h10M4 3.500v7M7 3.500v7" fill="none" stroke="#5a4500" />
  </svg>
);

const LensIcon = () => (
  <svg width="11" height="11" viewBox="0 0 11 11">
    <circle cx="4.500" cy="4.500" r="3.500" fill="#fff" stroke="#5a4500" strokeWidth="1.100" />
    <path d="m7 7 3.500 3.500" stroke="#5a4500" strokeWidth="1.700" />
  </svg>
);

const PlayIcon = () => (
  <svg width="10" height="11" viewBox="0 0 10 11">
    <path d="M1 .5 9.500 5.500 1 10.500Z" fill="#45a12e" stroke="#6f7d4e" strokeWidth="0.700" />
  </svg>
);

const SettingsIcon = () => (
  <svg width="14" height="13" viewBox="0 0 14 13">
    <path d="M.5.5h13v12H.5Z" fill="#fff" stroke="#5f6eae" />
    <path d="M2.500 3.500h2v2h-2ZM2.500 7.500h2v2h-2Z" fill="#8f9bcc" stroke="#4a5a9c" />
    <path d="M6.500 4.500h2M9.500 4.500h2M6.500 8.500h2M9.500 8.500h2" stroke="#4a5a9c" />
  </svg>
);

const Gear = ({ x, y }: { x: number; y: number }) => (
  <g transform={`translate(${x} ${y})`}>
    <circle r="3.900" fill="none" stroke="#74808f" strokeWidth="1.800" strokeDasharray="1.700 1.363" />
    <circle r="2.600" fill="#e8ecf2" stroke="#7d8898" strokeWidth="1.500" />
  </g>
);

const FolderGearIcon = () => (
  <svg width="16" height="16" viewBox="0 0 16 16">
    <path d="M1 13V3l1-1.500h4L7.500 3H14v10Z" fill="#fbdc85" stroke="#c9a553" strokeWidth="0.900" />
    <path d="M1.500 13 3 6h11.500l-1 7Z" fill="#fdf0c2" />
    <Gear x={10.5} y={10.5} />
  </svg>
);

const SaveGearIcon = () => (
  <svg width="17" height="16" viewBox="0 0 17 16">
    <path d="M1 1h11v11H1Z" fill="#7ba5c2" stroke="#58798f" />
    <path d="M3.500 1.500h6v4h-6ZM3 8h7v4H3Z" fill="#f1f6fa" />
    <Gear x={11.5} y={10.5} />
  </svg>
);

const WindowGearIcon = () => (
  <svg width="15" height="14" viewBox="0 0 15 14">
    <path d="M.5.5h14v13H.5Z" fill="#fff" stroke="#7fa3c2" />
    <path d="M0 0h15v3H0Z" fill="#4d86b3" />
    <Gear x={7.5} y={8} />
  </svg>
);

const HelpIcon = () => (
  <svg width="16" height="16" viewBox="0 0 16 16">
    <circle cx="8" cy="8" r="7.300" fill="url(#orange)" stroke="#a08a68" />
    <path d="M5.500 6.200C5.500 3 10.700 3.200 10.500 6c-.1 1.500-2.300 1.600-2.400 3.500M8.100 11v1.800" fill="none" stroke="#5d3f1b" strokeWidth="1.500" />
  </svg>
);

const NoteIcon = () => (
  <svg width="11" height="13" viewBox="0 0 11 13">
    <path d="M.5.5h7l3 3v9H.5Z" fill="#f5fafd" stroke="#7b9bb3" />
    <path d="M4.500 2.500h2v1.700h-2ZM4 5.500h2.500V10h1v1H4v-1h.7V6.500H4Z" fill="#268517" />
  </svg>
);

const Arrow = ({ d, fill }: { d: string; fill: string }) => (
  <svg width="7" height="7" viewBox="0 0 7 7">
    <path d={d} fill={fill} />
  </svg>
);

const ResizeGrip = () => (
  <svg width="11" height="11" viewBox="0 0 11 11">
    <path d="M7 1h2v2H7ZM7 6h2v2H7ZM2 6h2v2H2Z" fill="#7c7d81" />
    <path d="M8 2h2v2H8ZM8 7h2v2H8ZM3 7h2v2H3Z" fill="#e8e8ea" opacity="0.700" />
  </svg>
);

/* ---------- data ---------- */

const sections = [
  { label: "Рабочий\nстол", w: 91, icon: <DeskIcon /> },
  { label: "Планирование и\nсанкционирование", w: 108, icon: <PlanIcon /> },
  { label: "Денежные\nсредства", w: 94, icon: <MoneyIcon /> },
  { label: "Материальные\nзапасы", w: 86, icon: <BoxesIcon /> },
  { label: "Основные средства,\nНМА, НПА", w: 122, icon: <VanIcon /> },
  { label: "Услуги, работы,\nпроизводство", w: 93, icon: <ToolboxIcon /> },
  { label: "Учет и\nотчетность", w: 95, icon: <AccountingIcon />, active: true },
  { label: "Нормативно-справочная\nинформация", w: 133, icon: <BindersIcon /> },
  { label: "Настройка и\nадминистрирование", w: 122, icon: <AdminIcon /> },
];

const tabs = [
  { label: "Рабочий стол", w: 151, desk: true },
  { label: "Информация", w: 121 },
  { label: "Журнал проводок (ЕПСБУ)", w: 192 },
  { label: "Сводные данные об исполнении бюдж...", w: 242 },
  { label: "Сводные проводки за Май 2014 г. ГОБ...", w: 242 },
  { label: "Сводные данные об исполнении плана...", w: 241, active: true },
];

const columnWidths = [147, 42, 102, 98, 99, 95, 95, 92, 84, 95, 95, 138];

type Line = { group?: string; kps?: string; kek?: string; v: string[] };

const K2 = "00200000000000000";
const K4 = "00100000000000000";

const plan = (kps: string, kek: string, amount: string, a = "", b = "", cash = ""): Line => ({
  kps,
  kek,
  v: ["", "", amount, a, b, cash, cash, a, b, ""],
});

const lines: Line[] = [
  { group: "2", v: ["2 350 000,00", "", "2 350 000,00", "500 696,00", "419 256,00", "286 948,00", "286 948,00", "500 696,00", "419 256,00", "2 350 000,00"] },
  { kps: K2, kek: "130", v: ["2 350 000,00", "", "", "", "", "15 000,00", "15 000,00", "", "", "2 350 000,00"] },
  { kps: K2, kek: "180", v: ["", "", "", "", "", "236 900,00", "236 900,00", "", "", ""] },
  plan(K2, "211", "1 000 000,00", "120 000,00", "120 000,00"),
  plan(K2, "212", "50 000,00"),
  plan(K2, "213", "250 000,00", "31 800,00", "31 800,00"),
  plan(K2, "221", "30 000,00", "4 050,00", "2 700,00"),
  plan(K2, "222", "100 000,00", "600,00", "600,00"),
  plan(K2, "223", "100 000,00", "90 000,00", "14 500,00"),
  plan(K2, "225", "20 000,00", "2 550,00", "1 500,00"),
  plan(K2, "226", "200 000,00", "17 820,00", "14 280,00"),
  plan(K2, "290", "20 000,00"),
  plan(K2, "310", "200 000,00", "177 000,00", "177 000,00"),
  plan(K2, "340", "380 000,00", "56 876,00", "56 876,00", "35 048,00"),
  { group: "4", v: ["5 500 000,00", "1 375 000,00", "5 500 000,00", "893 821,00", "707 449,66", "", "", "893 821,00", "707 449,66", "4 125 000,00"] },
  { kps: K4, kek: "180", v: ["5 500 000,00", "1 375 000,00", "", "", "", "", "", "", "", "4 125 000,00"] },
  plan(K4, "211", "3 000 000,00", "496 000,00", "496 000,00"),
  plan(K4, "212", "50 000,00"),
  plan(K4, "213", "750 000,00", "125 080,00", "125 080,00"),
  plan(K4, "221", "50 000,00", "6 750,00", "4 500,00"),
  plan(K4, "222", "100 000,00"),
  plan(K4, "223", "300 000,00", "209 600,00", "37 801,36"),
  plan(K4, "225", "50 000,00", "7 650,00", "5 100,00"),
  plan(K4, "226", "300 000,00", "48 741,00", "38 968,30"),
  plan(K4, "310", "300 000,00"),
  plan(K4, "340", "600 000,00"),
  { group: "", v: Array(10).fill("") },
];

/* ---------- page ---------- */

const ReportTable = () => (
  <Table>
    <colgroup>
      {columnWidths.map((w, i) => (
        <col key={i} width={w} />
      ))}
    </colgroup>
    <thead>
      <HeadRow $h={17}>
        <HeadCell colSpan={2} $selected>КФО</HeadCell>
        <HeadCell colSpan={2}>Финансовое обеспечение</HeadCell>
        <HeadCell rowSpan={2}>План ФХД<br />расходы</HeadCell>
        <HeadCell colSpan={2}>Принято</HeadCell>
        <HeadCell rowSpan={2}>Кассовое<br />поступление</HeadCell>
        <HeadCell rowSpan={2}>Кассовое<br />выбытие</HeadCell>
        <HeadCell colSpan={2}>Не исполненно</HeadCell>
        <HeadCell rowSpan={2}>Неисполненное<br />финансовое<br />обеспечение</HeadCell>
      </HeadRow>
      <HeadRow $h={33}>
        <HeadCell>КПС</HeadCell>
        <HeadCell>КЭК</HeadCell>
        <HeadCell>Утвержденное</HeadCell>
        <HeadCell>Исполненное</HeadCell>
        <HeadCell>обязательств</HeadCell>
        <HeadCell>денежных<br />обязательств</HeadCell>
        <HeadCell>обязательств</HeadCell>
        <HeadCell>денежных<br />обязательств</HeadCell>
      </HeadRow>
    </thead>
    <tbody>
      {lines.map((line, i) => (
        <Row key={i} $group={line.group !== undefined}>
          {line.group !== undefined ? (
            <Cell colSpan={2} $align="left">{line.group}</Cell>
          ) : (
            <>
              <Cell $align="code">{line.kps}</Cell>
              <Cell $align="left">{line.kek}</Cell>
            </>
          )}
          {line.v.map((value, j) => (
            <Cell key={j}>{value}</Cell>
          ))}
        </Row>
      ))}
    </tbody>
  </Table>
);

export default function App() {
  return (
    <>
      <GlobalStyle />
      <Gradients />
      <Window>
        <TitleBar>
          <BarButton $w={17} aria-label="Главное меню"><LogoIcon /></BarButton>
          <BarButton $w={29} aria-label="Меню функций"><MenuCircleIcon /></BarButton>
          <BarButton $w={19} aria-label="Закладка"><RedCircleIcon /></BarButton>
          <BarSeparator $m={4} />
          <BarButton $w={19} aria-label="Избранное"><Star /></BarButton>
          <BarSeparator $m={4} />
          <TitleText>
            {"ГОБУ ВПО Университет искусств (Субсидия) / Администратор / Бухгалтерия государственного учреждения, редакция 2.0  (1С:Предприятие)"}
          </TitleText>
          <BarButton aria-label="Сохранить"><SaveIcon /></BarButton>
          <BarButton aria-label="Печать"><PrintIcon /></BarButton>
          <BarButton aria-label="Просмотр"><PreviewIcon /></BarButton>
          <BarSeparator />
          <BarButton aria-label="Добавить в избранное"><AddStarIcon /></BarButton>
          <BarButton aria-label="Список избранного"><FavoritesIcon /></BarButton>
          <BarSeparator />
          <BarButton aria-label="Калькулятор"><CalculatorIcon /></BarButton>
          <BarButton aria-label="Календарь"><CalendarIcon /></BarButton>
          <BarSeparator />
          <MemoryButton>M</MemoryButton>
          <MemoryButton>M+</MemoryButton>
          <MemoryButton>M−</MemoryButton>
          <BarSeparator />
          <BarButton aria-label="Справка"><InfoIcon /></BarButton>
          <BarButton $w={12} aria-label="Ещё"><SmallIcon name="caret" /></BarButton>
          <BarSeparator />
          <BarButton $w={21} aria-label="Свернуть"><SmallIcon name="min" /></BarButton>
          <BarButton $w={21} aria-label="Развернуть"><SmallIcon name="max" /></BarButton>
          <BarButton $w={21} aria-label="Закрыть"><SmallIcon name="close" /></BarButton>
        </TitleBar>

        <Body>
          <Ribbon>
            {sections.map((s) => (
              <Section key={s.label} $w={s.w} $active={s.active}>
                {s.icon}
                {s.label}
              </Section>
            ))}
          </Ribbon>

          <TabStrip>
            {tabs.map((t) => (
              <Tab key={t.label} $w={t.w} $active={t.active}>
                {t.desk && <DeskIcon w={28} h={20} />}
                <TabLabel>{t.label}</TabLabel>
                <TabClose aria-label="Закрыть вкладку"><CloseIcon /></TabClose>
              </Tab>
            ))}
            <TabMenu aria-label="Список вкладок"><TabMenuIcon /></TabMenu>
          </TabStrip>

          <Page>
            <Heading>Сводные данные об исполнении плана ФХД с начала года на Январь 2014 г. - Май 2014 г.</Heading>

            <FormRow>
              <FieldLabel htmlFor="from">Период:</FieldLabel>
              <Field $w={96}>
                <Input id="from" defaultValue="01.01.2012" />
                <FieldButton aria-label="Выбрать дату"><DateIcon /></FieldButton>
              </Field>
              <Field $w={96}>
                <Input aria-label="Конец периода" defaultValue="31.12.2012" />
                <FieldButton aria-label="Выбрать дату"><DateIcon /></FieldButton>
              </Field>
              <MoreButton>...</MoreButton>
              <Legend>Отчетный период</Legend>
            </FormRow>

            <FormRow>
              <FieldLabel htmlFor="org">Организация:</FieldLabel>
              <Field $w={200}>
                <Input id="org" />
                <FieldButton>...</FieldButton>
                <FieldButton aria-label="Найти"><LensIcon /></FieldButton>
              </Field>
              <RadioGroup>
                <RadioLabel><Radio type="radio" name="year" defaultChecked />Текущий год</RadioLabel>
                <RadioLabel><Radio type="radio" name="year" />Первый год</RadioLabel>
              </RadioGroup>
            </FormRow>

            <CommandRow>
              <RunButton><PlayIcon />Сформировать отчет</RunButton>
              <Sigma>Σ</Sigma>
              <Field $w={176}>
                <Input $right aria-label="Сумма" defaultValue="0,00" />
                <FieldButton aria-label="Калькулятор"><KeypadIcon /></FieldButton>
              </Field>
              <Commands>
                <CommandButton><SettingsIcon />Настройки</CommandButton>
                <CommandSeparator />
                <CommandButton aria-label="Открыть настройки"><FolderGearIcon /></CommandButton>
                <CommandButton $ml={7} aria-label="Сохранить настройки"><SaveGearIcon /></CommandButton>
                <CommandSeparator />
                <CommandButton aria-label="Параметры окна"><WindowGearIcon /></CommandButton>
                <CommandButton $ml={7} aria-label="Помощь"><HelpIcon /></CommandButton>
              </Commands>
            </CommandRow>

            <Report>
              <Viewport>
                <Gutter>
                  <GutterGroup $rows={14}><Collapse aria-label="Свернуть группу 2" /></GutterGroup>
                  <GutterGroup $rows={12}><Collapse aria-label="Свернуть группу 4" /></GutterGroup>
                  <GutterGroup $rows={1}><Collapse aria-label="Свернуть группу" /></GutterGroup>
                </Gutter>
                <ReportTable />
              </Viewport>
              <VScroll>
                <ScrollButton $tall aria-label="Вверх"><Arrow d="M3.500 0 7 7H0Z" fill="#c4bfae" /></ScrollButton>
                <VThumb><Grip /></VThumb>
                <VTrack />
                <ScrollButton $tall aria-label="Вниз"><Arrow d="M0 0h7L3.500 7Z" fill="#7f7c72" /></ScrollButton>
              </VScroll>
              <HScroll>
                <ScrollButton aria-label="Влево"><Arrow d="M7 0v7L0 3.500Z" fill="#c4bfae" /></ScrollButton>
                <HThumb><Grip /></HThumb>
                <HTrack />
                <ScrollButton aria-label="Вправо"><Arrow d="M0 0l7 3.500L0 7Z" fill="#7f7c72" /></ScrollButton>
              </HScroll>
              <Corner />
            </Report>
          </Page>
        </Body>

        <StatusBar>
          <HistoryButton>История...</HistoryButton>
          <Messages>
            <Message><NoteIcon /><MessageLink href="#banks">Обновить классификатор банков</MessageLink></Message>
            <MessageSeparator />
            <Message><NoteIcon />Был изменен период оповещений о резервном копировании.</Message>
            <MessageSeparator />
            <Message><NoteIcon /><MessageLink href="#backup">Рекомендуется настроить резервное копирование информационной базы.</MessageLink></Message>
          </Messages>
          <ResizeGrip />
        </StatusBar>
      </Window>
    </>
  );
}
